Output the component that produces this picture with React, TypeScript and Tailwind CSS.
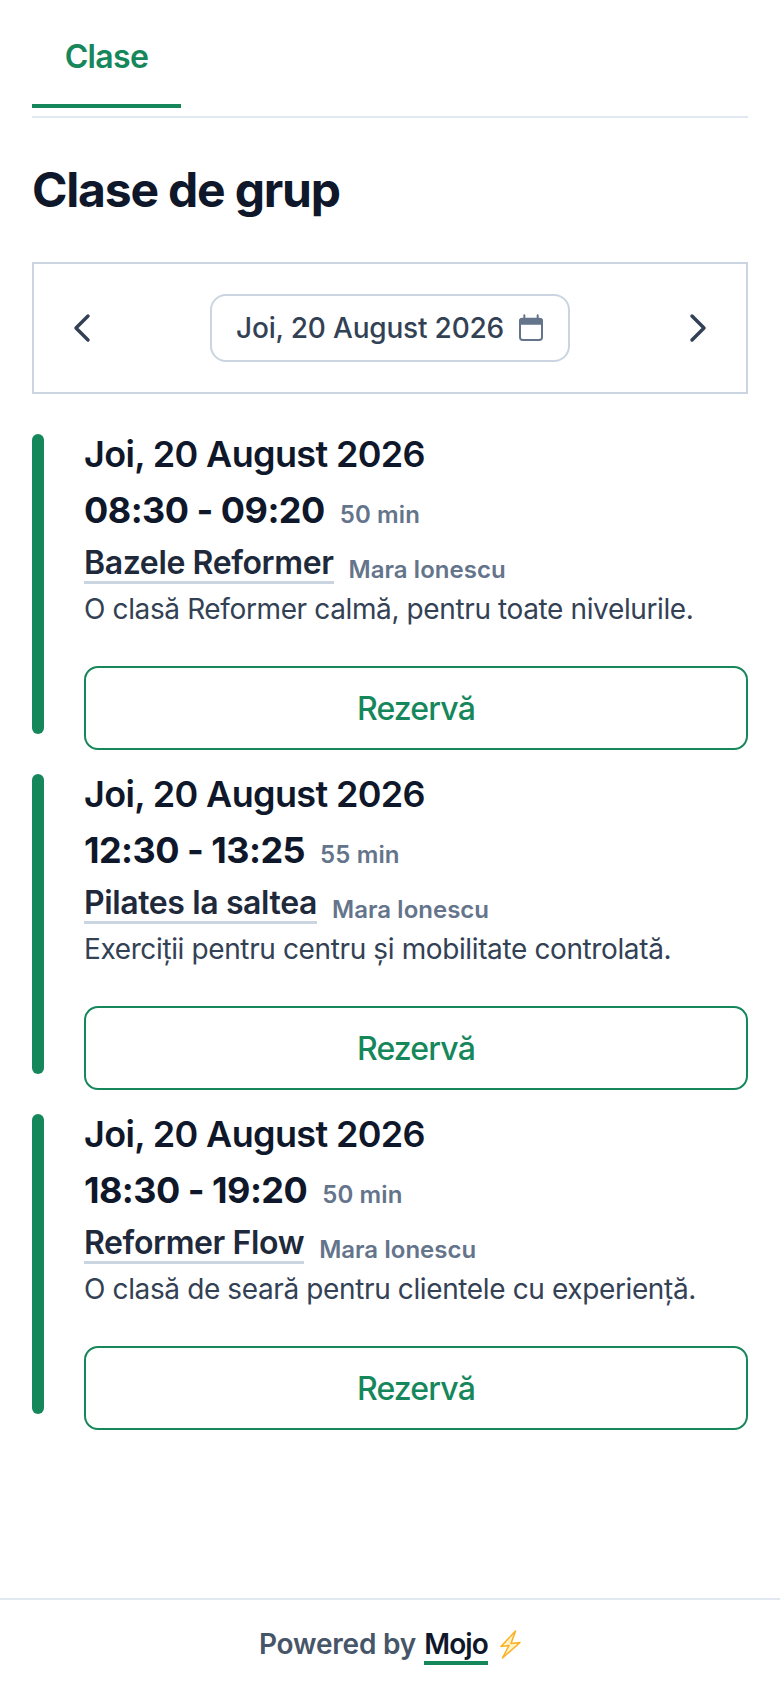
import React from 'react';
import { ChevronLeft, ChevronRight } from 'lucide-react';

const classes = [
  {
    time: '08:30 - 09:20',
    duration: '50 min',
    name: 'Bazele Reformer',
    description: 'O clasă Reformer calmă, pentru toate nivelurile.',
  },
  {
    time: '12:30 - 13:25',
    duration: '55 min',
    name: 'Pilates la saltea',
    description: 'Exerciții pentru centru și mobilitate controlată.',
  },
  {
    time: '18:30 - 19:20',
    duration: '50 min',
    name: 'Reformer Flow',
    description: 'O clasă de seară pentru clientele cu experiență.',
  },
];

const CalendarIcon = () => (
  <svg viewBox="0 0 24 24" className="w-[32px] h-[32px] text-[#64748b]" fill="none">
    <path d="M7 2.5v3M17 2.5v3" stroke="currentColor" strokeWidth="1.5" strokeLinecap="round" />
    <path d="M3 7a2.5 2.5 0 0 1 2.5-2.5h13A2.5 2.5 0 0 1 21 7v2.5H3V7Z" fill="currentColor" />
    <rect x="3.75" y="5" width="16.5" height="16" rx="2" stroke="currentColor" strokeWidth="1.5" />
  </svg>
);

const BoltIcon = () => (
  <svg viewBox="-1 -1 21 29" className="ml-[4px] w-[21px] h-[29px] self-center">
    <path d="M14.5 0 0 15.5 8 14.5 1.5 27 19 11.5 10 12.5 14.5 0Z" fill="#fef3c7" stroke="#fbb024" strokeWidth="1.5" strokeLinejoin="round" />
  </svg>
);

const App: React.FC = () => {
  return (
    <div className="min-h-[1688px] flex flex-col bg-white font-['Inter',sans-serif] tracking-[-0.012em]">
      <main className="flex-1 px-8">
        {/* Tabs */}
        <div className="border-b-2 border-[#e2e8f0] h-[118px] pb-2">
          <div className="w-[149px] h-[108px] border-b-4 border-[#15875a] pt-[37px] text-center text-[32px] leading-[40px] font-semibold tracking-[-0.02em] text-[#15875a]">
            Clase
          </div>
        </div>

        <h1 className="mt-[42px] text-[48px] leading-[60px] font-bold tracking-[-0.025em] text-[#0f172a]">Clase de grup</h1>

        {/* Date picker */}
        <div className="mt-[42px] h-[132px] border-2 border-[#cbd5e1] flex items-center justify-between px-6">
          <ChevronLeft className="w-[48px] h-[48px] text-[#334155]" strokeWidth={1.75} />
          <div className="h-[68px] w-[360px] rounded-[16px] border-2 border-[#cbd5e1] flex items-center pl-[24px] gap-[11px] text-[28px] font-medium text-[#334155]">
            Joi, 20 August 2026
            <CalendarIcon />
          </div>
          <ChevronRight className="w-[48px] h-[48px] text-[#334155]" strokeWidth={1.75} />
        </div>

        {/* Class list */}
        <div className="mt-[40px] flex flex-col gap-[24px]">
          {classes.map((c) => (
            <div key={c.time} className="flex items-start gap-[40px]">
              <div className="w-[12px] h-[300px] rounded-full bg-[#15875a]" />
              <div className="flex-1 flex flex-col h-[316px]">
                <div className="text-[36px] leading-[40px] font-semibold tracking-[-0.018em] text-[#0f172a]">Joi, 20 August 2026</div>
                <div className="mt-[12px] flex items-baseline gap-[15px]">
                  <span className="text-[36px] leading-[48px] font-bold tracking-[-0.015em] text-[#0f172a]">{c.time}</span>
                  <span className="text-[24px] font-semibold tracking-[0.005em] text-[#64748b]">{c.duration}</span>
                </div>
                <div className="mt-[10px] flex items-end gap-[15px]">
                  <span className="text-[32px] leading-[37px] font-semibold tracking-[-0.012em] text-[#1e293b] border-b-[3px] border-[#cbd5e1]">{c.name}</span>
                  <span className="text-[24px] leading-[29px] font-semibold tracking-normal text-[#64748b]">Mara Ionescu</span>
                </div>
                <p className="mt-[6px] text-[28px] leading-[38px] tracking-[-0.0135em] text-[#334155]">{c.description}</p>
                <button className="mt-auto h-[84px] pt-[1px] rounded-[14px] border-2 border-[#15875a] text-[32px] font-medium tracking-[-0.026em] text-[#15875a]">
                  Rezervă
                </button>
              </div>
            </div>
          ))}
        </div>
      </main>

      {/* Footer */}
      <footer className="h-[90px] border-t-2 border-[#e2e8f0] flex items-center justify-center">
        <div className="flex items-baseline gap-[8px] text-[28px] font-semibold text-[#475569]">
          <span>Powered by</span>
          <span className="text-[#0f172a] tracking-[-0.03em] border-b-4 border-[#15875a] leading-[33px]">Mojo</span>
          <BoltIcon />
        </div>
      </footer>
    </div>
  );
};

export default App;
